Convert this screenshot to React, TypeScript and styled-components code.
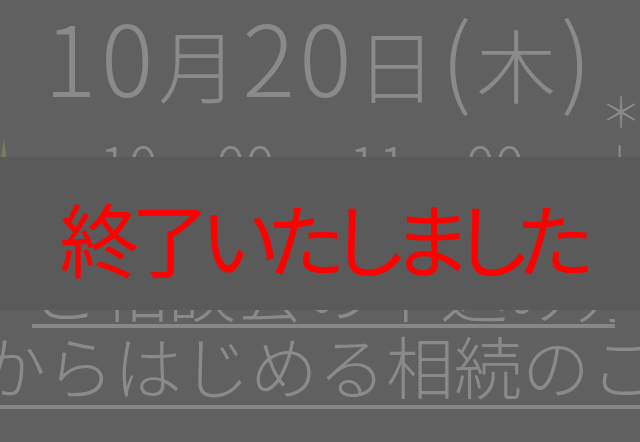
import React from "react";
import styled, { createGlobalStyle } from "styled-components";

const Global = createGlobalStyle`
  html, body {
    margin: 0;
    padding: 0;
    background: #606060;
  }
  body {
    width: 640px;
    height: 442px;
    overflow: hidden;
    font-family: "Noto Sans CJK JP", "Noto Sans", sans-serif;
  }
`

const Page = styled.div`
  position: relative;
  width: 640px;
  height: 442px;
  overflow: hidden;
  background: #606060;
  color: #8a8a8a;`

const DateRow = styled.div`
  display: grid;
  grid-template-columns: 1fr auto 1fr;
  padding-top: 5px;`

const DateText = styled.div`
  grid-column: 2;
  font-size: 98px;
  font-weight: 300;
  line-height: 1;
  letter-spacing: 4.5px;
  white-space: nowrap;`

const Kanji = styled.span`
  font-size: 80px;`

const Note = styled.div`
  grid-column: 3;
  justify-self: end;
  align-self: start;
  width: 42px;
  margin: 79px -2px -100px 0;
  font-size: 42px;
  font-weight: 300;
  line-height: 52px;
  text-align: center;`

const TimeRow = styled.div`
  position: relative;
  margin-top: 32px;
  padding-left: 99px;
  font-size: 55px;
  font-weight: 300;
  line-height: 1;
  word-spacing: 10px;
  white-space: nowrap;`

const Deco = styled.svg`
  position: absolute;
  left: 0;
  top: 2px;`

const Heading = styled.div<{ $inset?: boolean }>`
  margin: ${p => (p.$inset ? "64px 25px 0 32px" : "3px 0 0 0")};
  padding-bottom: ${p => (p.$inset ? "2px" : "6px")};
  border-bottom: 4px solid #878787;
  font-size: 68px;
  font-weight: 300;
  line-height: 1;
  white-space: nowrap;
  text-align: ${p => (p.$inset ? "center" : "left")};
  text-indent: ${p => (p.$inset ? "0" : "-22px")};
  overflow: ${p => (p.$inset ? "hidden" : "visible")};`

const Banner = styled.div`
  position: absolute;
  left: 0;
  right: 0;
  top: 157px;
  height: 153px;
  background: #5a5a5a;
  display: flex;
  align-items: center;
  justify-content: center;
  padding-top: 4px;
  box-sizing: border-box;`

const BannerText = styled.div`
  color: #ff0000;
  font-size: 80px;
  font-weight: 400;
  line-height: 1;
  font-feature-settings: "palt" 1;
  letter-spacing: -9px;
  white-space: nowrap;
  padding-left: 4px;`

export default function App() {
  return (
    <>
      <Global/>
      <Page>
        <DateRow>
          <DateText>
            10<Kanji>月</Kanji>20<Kanji>日</Kanji>(<Kanji>木</Kanji>)
          </DateText>
          <Note>＊<br/>上</Note>
        </DateRow>
        <TimeRow>
          <Deco width="8" height="26" viewBox="0 0 8 26">
            <path d="M0 26 L4 2 L7 26 Z" fill="#7d7a5e"/>
          </Deco>
          10 : 00 ~ 11 : 00
        </TimeRow>
        <Heading $inset>ご相談会の申込み方法について</Heading>
        <Heading>からはじめる相続のこと</Heading>
        <Banner>
          <BannerText>終了いたしました</BannerText>
        </Banner>
      </Page>
    </>
  )
}
